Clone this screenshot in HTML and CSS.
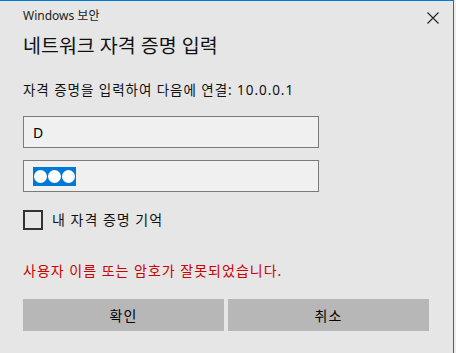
FILE: index.html
```html
<!DOCTYPE html>
<html lang="ko">
<head>
  <meta charset="utf-8">
  <title>Windows 보안</title>
  <link rel="stylesheet" href="styles.css">
</head>
<body>
  <div class="dialog">
    <div class="header">
      <span class="caption">Windows 보안</span>
      <svg class="close" width="12" height="12" viewBox="0 0 12 12">
        <path d="M0.5 0.5 L11.5 11.5 M11.5 0.5 L0.5 11.5" stroke="#222" stroke-width="1.1" fill="none"/>
      </svg>
    </div>
    <h1 class="title">네트워크 자격 증명 입력</h1>
    <p class="message">자격 증명을 입력하여 다음에 연결: 10.0.0.1</p>

    <div class="field">D</div>
    <div class="field field-second">
      <span class="selection">
        <span class="dot"></span><span class="dot"></span><span class="dot"></span>
      </span>
    </div>

    <label class="remember">
      <span class="checkbox"></span>
      <span>내 자격 증명 기억</span>
    </label>

    <p class="error">사용자 이름 또는 암호가 잘못되었습니다.</p>

    <div class="buttons">
      <button type="button">확인</button>
      <button type="button">취소</button>
    </div>
  </div>
</body>
</html>
```

FILE: styles.css
```css
body {
  margin: 0;
  background-color: #eeeeee;
  font-family: "Noto Sans", "Noto Sans CJK KR", sans-serif;
  color: #000;
}

.dialog {
  width: 430px;
  height: 352px;
  padding-left: 23px;
  background-color: #e6e6e6;
  border-top: 1px solid #0078d7;
  border-right: 1px solid #0078d7;
}

.header {
  display: flex;
  justify-content: space-between;
  align-items: center;
  padding-top: 7px;
  padding-right: 14px;
  height: 16px;
}

.caption {
  font-size: 12px;
  line-height: 16px;
  color: #222;
}

.close {
  margin-top: 3px;
}

.title {
  margin: 8px 0 0;
  font-size: 19.5px;
  font-weight: normal;
  line-height: 28px;
  color: #111;
}

.message {
  margin: 20px 0 0;
  font-size: 13.5px;
  line-height: 20px;
  letter-spacing: 0.95px;
  color: #111;
}

.field {
  box-sizing: border-box;
  width: 296px;
  height: 32px;
  margin-top: 16px;
  padding-left: 9px;
  display: flex;
  align-items: center;
  background-color: #f0f0f0;
  border: 1px solid #7a7a7a;
  font-size: 14px;
}

.field-second {
  margin-top: 12px;
}

.selection {
  display: flex;
  align-items: center;
  gap: 1px;
  height: 19px;
  padding: 0 1px;
  background-color: #0078d7;
  margin-top: 1px;
}

.dot {
  width: 13px;
  height: 13px;
  border-radius: 50%;
  background-color: #fff;
}

.remember {
  display: flex;
  align-items: center;
  gap: 9px;
  margin-top: 18px;
  font-size: 14px;
  line-height: 20px;
  letter-spacing: 1px;
  color: #111;
}

.checkbox {
  box-sizing: border-box;
  width: 20px;
  height: 20px;
  border: 2px solid #333;
}

.error {
  margin: 31px 0 0;
  font-size: 14px;
  line-height: 20px;
  letter-spacing: 1px;
  color: #cc0000;
}

.buttons {
  display: flex;
  gap: 4px;
  margin-top: 18px;
}

button {
  width: 201px;
  height: 32px;
  border: none;
  background-color: #b7b7b7;
  font-family: "Noto Sans", "Noto Sans CJK KR", sans-serif;
  font-size: 14px;
  letter-spacing: 1px;
  color: #000;
  padding: 0;
}
```
